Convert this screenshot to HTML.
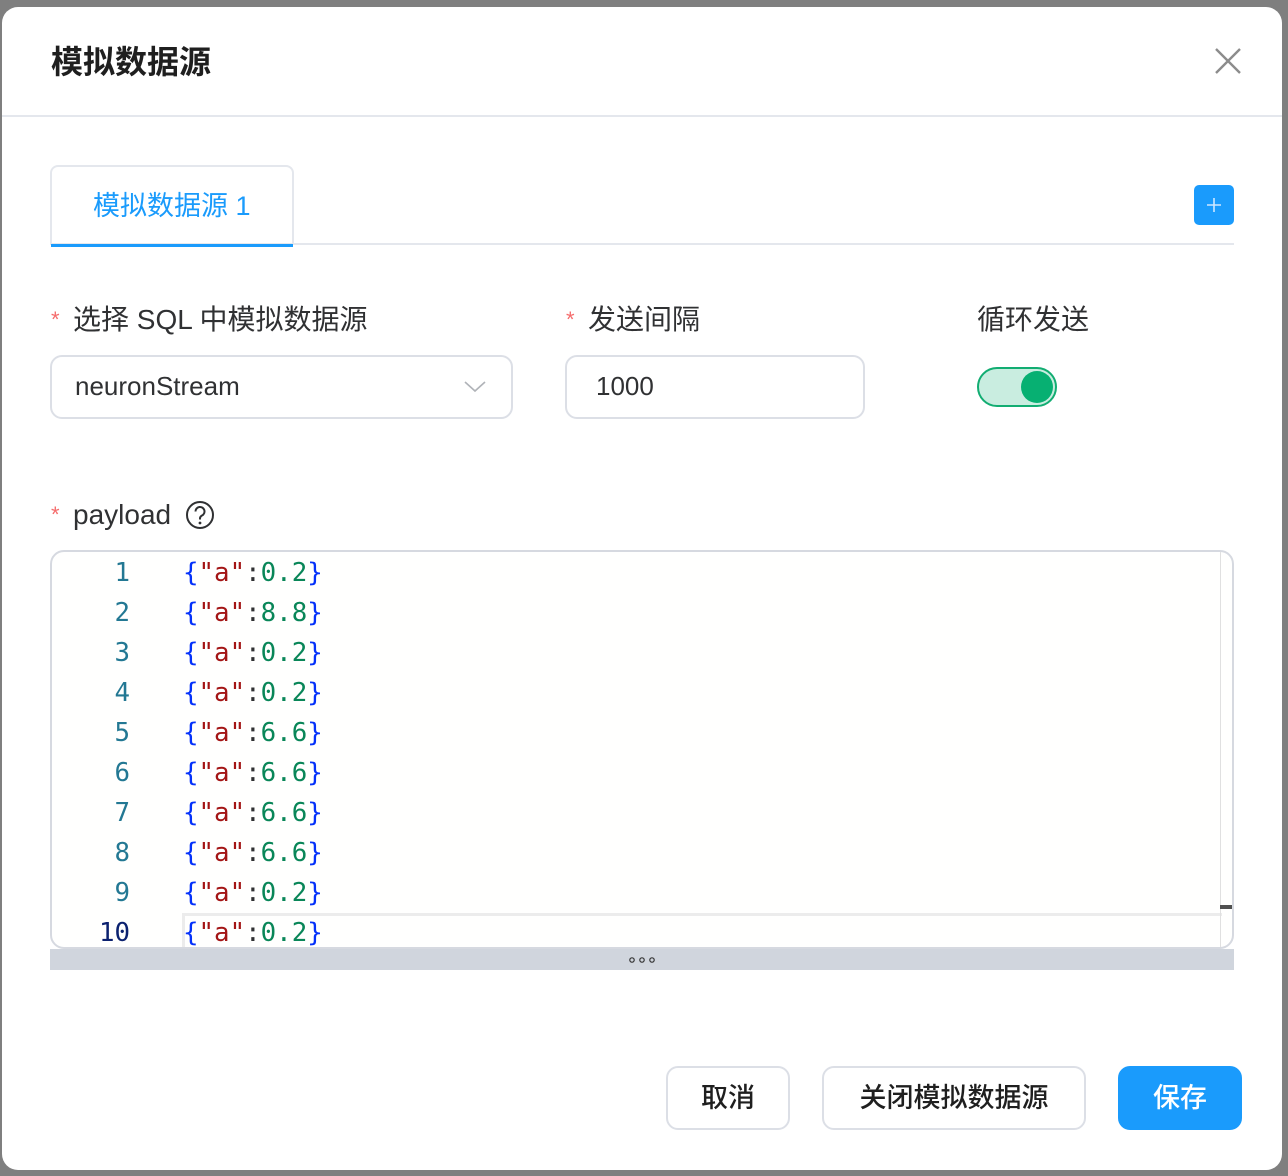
<!DOCTYPE html>
<html><head><meta charset="utf-8">
<style>
*{box-sizing:border-box;margin:0;padding:0}
body{width:1288px;height:1176px;background:#7f7f7f;position:relative;overflow:hidden;font-family:"Liberation Sans","Noto Sans CJK SC",sans-serif;color:#303133}
.abs{position:absolute}
.modal{left:2px;top:7px;width:1280px;height:1163px;background:#fff;border-radius:16px}
.title{left:51px;top:42px;font-size:32px;font-weight:bold;color:#1f1f1f;line-height:40px}
.hdrline{left:2px;top:115px;width:1280px;height:2px;background:#e4e7ed}
.lbl{font-size:28px;line-height:36px;color:#303133;white-space:nowrap}
.star{color:#f56c6c;font-size:22px;display:inline-block;width:22px;vertical-align:top}
.input{border:2px solid #dcdfe6;border-radius:12px;background:#fff;font-size:26px;line-height:58px;color:#303133}
.code{font-family:"DejaVu Sans Mono","Liberation Mono",monospace;font-size:25.8px;line-height:40px;white-space:pre}
.btn{border:2px solid #dcdfe6;border-radius:12px;background:#fff;font-size:27px;text-align:center;line-height:60px;color:#1f1f1f;font-weight:500}
</style></head><body>
<div class="abs modal"></div>
<div class="abs title">模拟数据源</div>
<svg class="abs" style="left:1214px;top:47px" width="28" height="28" viewBox="0 0 28 28"><path d="M2 2L26 26M26 2L2 26" stroke="#8c8c8c" stroke-width="2.4" fill="none"/></svg>
<div class="abs hdrline"></div>

<div class="abs" style="left:50px;top:165px;width:244px;height:80px;border:2px solid #e4e7ed;border-bottom:none;border-radius:8px 8px 0 0;background:#fff"></div>
<div class="abs" style="left:93px;top:188px;font-size:27px;line-height:36px;color:#1a9bfc">模拟数据源 1</div>
<div class="abs" style="left:50px;top:243px;width:1184px;height:2px;background:#e4e7ed"></div>
<div class="abs" style="left:51px;top:244px;width:242px;height:3px;background:#1a9bfc"></div>
<div class="abs" style="left:1194px;top:185px;width:40px;height:40px;background:#1a9bfc;border-radius:5px"></div>
<svg class="abs" style="left:1206px;top:197px" width="16" height="16"><path d="M8 1V15M1 8H15" stroke="#cfe8ff" stroke-width="1.6"/></svg>

<div class="abs lbl" style="left:51px;top:302px"><span class="star">*</span>选择 SQL 中模拟数据源</div>
<div class="abs lbl" style="left:566px;top:302px"><span class="star">*</span>发送间隔</div>
<div class="abs lbl" style="left:977px;top:302px">循环发送</div>

<div class="abs input" style="left:50px;top:355px;width:463px;height:64px;padding-left:23px">neuronStream</div>
<svg class="abs" style="left:463px;top:380px" width="24" height="14"><path d="M2 2L12 11L22 2" stroke="#b0b3b8" stroke-width="1.6" fill="none"/></svg>
<div class="abs input" style="left:565px;top:355px;width:300px;height:64px;padding-left:29px">1000</div>

<div class="abs" style="left:977px;top:367px;width:80px;height:40px;border-radius:20px;background:#c9ede0;border:2px solid #12ad72"></div>
<div class="abs" style="left:1021px;top:371px;width:32px;height:32px;border-radius:50%;background:#07b072"></div>

<div class="abs lbl" style="left:51px;top:497px"><span class="star">*</span>payload</div>
<svg class="abs" style="left:185px;top:500px" width="30" height="30" viewBox="0 0 30 30"><circle cx="15" cy="15" r="13" stroke="#303133" stroke-width="2" fill="none"/><path d="M10.5 11.5a4.5 4.5 0 1 1 6.5 4c-1.3.7-2 1.4-2 3v1" stroke="#303133" stroke-width="2" fill="none"/><circle cx="15" cy="23" r="1.4" fill="#303133"/></svg>

<div class="abs" style="left:50px;top:550px;width:1184px;height:399px;border:2px solid #d6d9e0;border-radius:14px;background:#fffffe;overflow:hidden">
  <div class="abs" style="left:130px;top:361px;width:1040px;height:40px;border-top:3px solid #ececec;border-left:3px solid #ececec"></div>
  <div class="abs" style="left:1168px;top:0;width:1px;height:400px;background:#e0e0e0"></div>
  <div class="abs" style="left:1168px;top:353px;width:12px;height:4px;background:#505050"></div>
</div>
<div class="abs code" style="left:60px;top:553px;width:70px;text-align:right;color:#237893">1
2
3
4
5
6
7
8
9
<span style="color:#0b216f">10</span></div>
<div class="abs code" style="left:183px;top:553px"><span style="color:#0431fa">{</span><span style="color:#a31515">"a"</span>:<span style="color:#098658">0.2</span><span style="color:#0431fa">}</span>
<span style="color:#0431fa">{</span><span style="color:#a31515">"a"</span>:<span style="color:#098658">8.8</span><span style="color:#0431fa">}</span>
<span style="color:#0431fa">{</span><span style="color:#a31515">"a"</span>:<span style="color:#098658">0.2</span><span style="color:#0431fa">}</span>
<span style="color:#0431fa">{</span><span style="color:#a31515">"a"</span>:<span style="color:#098658">0.2</span><span style="color:#0431fa">}</span>
<span style="color:#0431fa">{</span><span style="color:#a31515">"a"</span>:<span style="color:#098658">6.6</span><span style="color:#0431fa">}</span>
<span style="color:#0431fa">{</span><span style="color:#a31515">"a"</span>:<span style="color:#098658">6.6</span><span style="color:#0431fa">}</span>
<span style="color:#0431fa">{</span><span style="color:#a31515">"a"</span>:<span style="color:#098658">6.6</span><span style="color:#0431fa">}</span>
<span style="color:#0431fa">{</span><span style="color:#a31515">"a"</span>:<span style="color:#098658">6.6</span><span style="color:#0431fa">}</span>
<span style="color:#0431fa">{</span><span style="color:#a31515">"a"</span>:<span style="color:#098658">0.2</span><span style="color:#0431fa">}</span>
<span style="color:#0431fa">{</span><span style="color:#a31515">"a"</span>:<span style="color:#098658">0.2</span><span style="color:#0431fa">}</span></div>
<div class="abs" style="left:50px;top:949px;width:1184px;height:21px;background:#d0d5dd"></div>
<svg class="abs" style="left:628px;top:956px" width="28" height="8"><circle cx="4" cy="4" r="2.2" stroke="#333" stroke-width="1.2" fill="none"/><circle cx="14" cy="4" r="2.2" stroke="#333" stroke-width="1.2" fill="none"/><circle cx="24" cy="4" r="2.2" stroke="#333" stroke-width="1.2" fill="none"/></svg>

<div class="abs btn" style="left:666px;top:1066px;width:124px;height:64px">取消</div>
<div class="abs btn" style="left:822px;top:1066px;width:264px;height:64px">关闭模拟数据源</div>
<div class="abs btn" style="left:1118px;top:1066px;width:124px;height:64px;background:#1a9bfc;border-color:#1a9bfc;color:#fff">保存</div>
</body></html>
